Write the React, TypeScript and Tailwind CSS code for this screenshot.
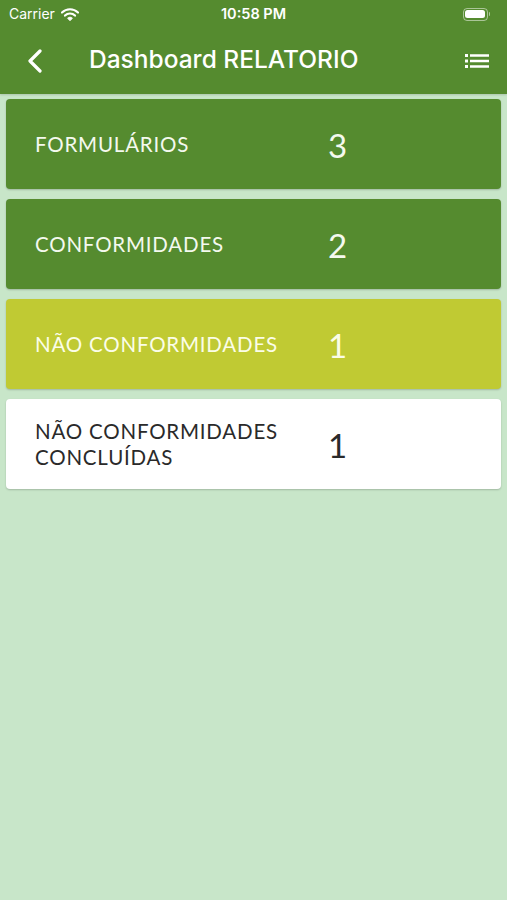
import React from "react";

const cards = [
  { label: ["FORMULÁRIOS"], value: "3", bg: "bg-[#558b2f]", fg: "text-[#f4f9ee]" },
  { label: ["CONFORMIDADES"], value: "2", bg: "bg-[#558b2f]", fg: "text-[#f4f9ee]" },
  { label: ["NÃO CONFORMIDADES"], value: "1", bg: "bg-[#c0ca33]", fg: "text-[#fbfde8]" },
  { label: ["NÃO CONFORMIDADES", "CONCLUÍDAS"], value: "1", bg: "bg-white", fg: "text-[#2a2a2a]" },
];

export default function App() {
  return (
    <div className="w-[507px] h-[900px] bg-[#c8e6c9] flex flex-col overflow-hidden">
      <div className="bg-[#558b2f] h-[94px] flex flex-col shadow-[0_1px_2px_rgba(0,0,0,0.15)]">
        <div className="h-[28px] relative flex items-center px-[9px] text-white" style={{ fontFamily: "Inter, 'Liberation Sans', sans-serif" }}>
          <span className="text-[14px] leading-none">Carrier</span>
          <svg width="18" height="13" viewBox="0 0 18 13" className="ml-[6px]">
            <path d="M1 4.5 A11.5 11.5 0 0 1 17 4.5" stroke="white" strokeWidth="2.2" fill="none" strokeLinecap="round" />
            <path d="M4 7.6 A7 7 0 0 1 14 7.6" stroke="white" strokeWidth="2.2" fill="none" strokeLinecap="round" />
            <path d="M6.6 10.3 A3.2 3.2 0 0 1 11.4 10.3 L9 12.6 Z" fill="white" stroke="white" strokeWidth="1" strokeLinejoin="round" />
          </svg>
          <span className="absolute left-0 right-0 text-center text-[14.5px] font-semibold leading-none">10:58 PM</span>
          <div className="ml-auto flex items-center mr-[8px]">
            <div className="w-[25px] h-[13px] rounded-[4px] border border-white/50 p-[1.5px]">
              <div className="w-full h-full bg-white rounded-[2.5px]" />
            </div>
            <div className="w-[1.5px] h-[4px] bg-white/50 rounded-r ml-[1px]" />
          </div>
        </div>
        <div className="flex-1 flex items-center relative">
          <svg width="16" height="24" viewBox="0 0 16 24" className="ml-[27px]">
            <path d="M13 2 L3 12 L13 22" stroke="white" strokeWidth="3.2" fill="none" strokeLinecap="round" strokeLinejoin="round" />
          </svg>
          <span className="ml-[46px] -mt-[3px] text-white text-[24.5px] font-medium" style={{ fontFamily: "Inter, 'Liberation Sans', sans-serif" }}>
            Dashboard RELATORIO
          </span>
          <svg width="24" height="14" viewBox="0 0 24 14" className="ml-auto mr-[18px]">
            <rect x="0" y="0" width="3" height="3" fill="white" />
            <rect x="0" y="5.5" width="3" height="3" fill="white" />
            <rect x="0" y="11" width="3" height="3" fill="white" />
            <rect x="5" y="0.25" width="19" height="2.5" fill="white" />
            <rect x="5" y="5.75" width="19" height="2.5" fill="white" />
            <rect x="5" y="11.25" width="19" height="2.5" fill="white" />
          </svg>
        </div>
      </div>
      <div className="flex flex-col gap-[10px] px-[6px] pt-[5px]" style={{ fontFamily: "Lato, 'Open Sans', sans-serif" }}>
        {cards.map((c, i) => (
          <div key={i} className={`${c.bg} ${c.fg} h-[90px] rounded-[4px] shadow-[0_1px_2px_rgba(0,0,0,0.2)] flex items-center pl-[29px]`}>
            <div className="w-[293px] text-[20.5px] leading-[26px] tracking-[0.8px]">
              {c.label.map((l, j) => (
                <div key={j}>{l}</div>
              ))}
            </div>
            <div className="text-[33px] leading-none mt-[2px]">{c.value}</div>
          </div>
        ))}
      </div>
    </div>
  );
}
